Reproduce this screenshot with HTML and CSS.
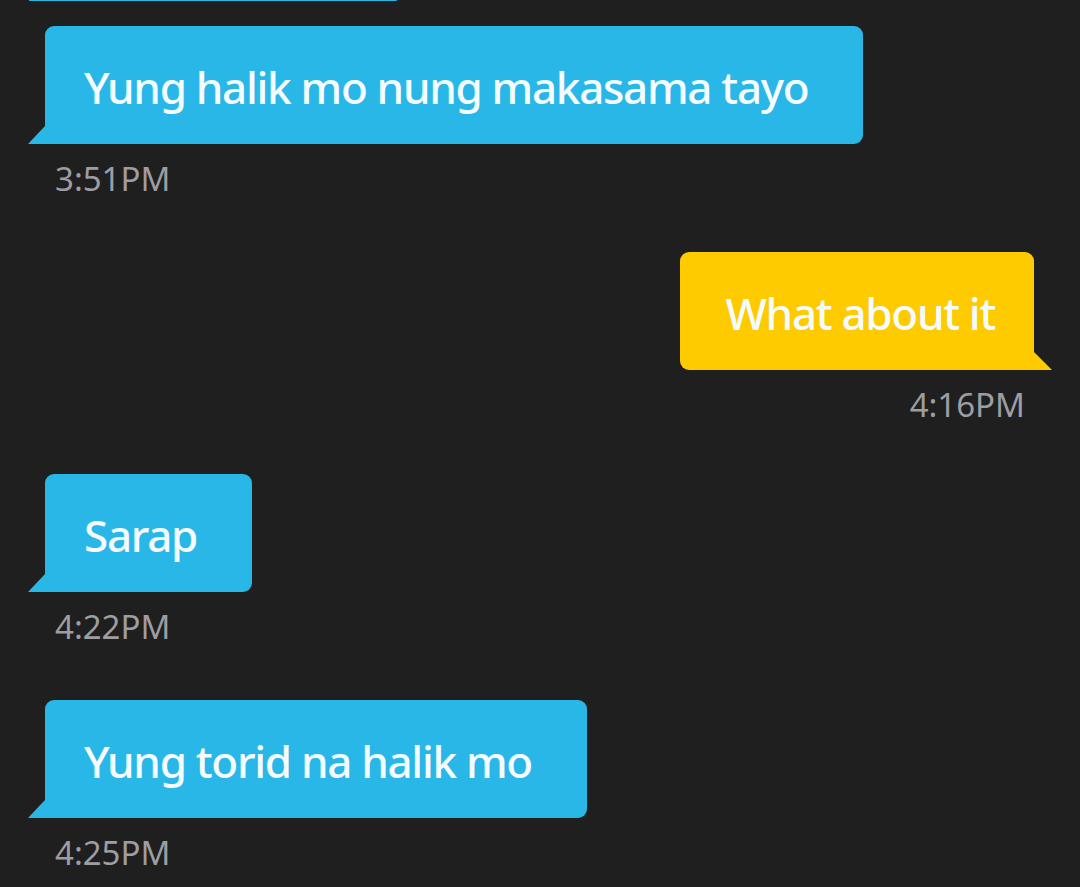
FILE: index.html
```html
<!DOCTYPE html>
<html lang="en">
<head>
    <meta charset="UTF-8">
    <meta name="viewport" content="width=device-width, initial-scale=1.0">
    <title>Chat</title>
    <link rel="stylesheet" href="styles.css">
</head>
<body>
    <div class="chat">
        <div class="bubble-cut"></div>

        <div class="msg in">
            <div class="bubble">Yung halik mo nung makasama tayo</div>
            <div class="time">3:51PM</div>
        </div>

        <div class="msg out">
            <div class="bubble">What about it</div>
            <div class="time">4:16PM</div>
        </div>

        <div class="msg in">
            <div class="bubble">Sarap</div>
            <div class="time">4:22PM</div>
        </div>

        <div class="msg in">
            <div class="bubble">Yung torid na halik mo</div>
            <div class="time">4:25PM</div>
        </div>
    </div>
</body>
</html>
```

FILE: styles.css
```css
:root {
    --bg-color: #1f1f1f;
    --blue: #29b7e8;
    --yellow: #fecb00;
    --text-color: #f5fbff;
    --dim-color: #9d9da2;
}

* {
    box-sizing: border-box;
    margin: 0;
    padding: 0;
}

body, html {
    background-color: var(--bg-color);
    font-family: 'Noto Sans', 'Open Sans', sans-serif;
    height: 100%;
    overflow: hidden;
}

.chat {
    display: flex;
    flex-direction: column;
}

.bubble-cut {
    width: 368px;
    height: 1px;
    margin-left: 29px;
    background: var(--blue);
    border-bottom-right-radius: 1px;
}

.msg {
    display: flex;
    flex-direction: column;
    margin-top: 25px;
    margin-bottom: 32px;
}

.msg.in {
    align-items: flex-start;
    padding-left: 45px;
}

.msg.out {
    align-items: flex-end;
    padding-right: 46px;
    margin-bottom: 28px;
}

.bubble {
    position: relative;
    height: 118px;
    display: flex;
    align-items: center;
    padding: 3px 55px 0 39px;
    font-size: 44px;
    font-weight: 500;
    letter-spacing: -1.3px;
    line-height: 1;
    color: var(--text-color);
    border-radius: 9px;
    white-space: nowrap;
}

.in .bubble {
    background: var(--blue);
    border-bottom-left-radius: 0;
}

.out .bubble {
    background: var(--yellow);
    border-bottom-right-radius: 0;
    padding: 3px 39px 0 46px;
}

/* tail */
.bubble::after {
    content: "";
    position: absolute;
    bottom: 0;
    width: 17px;
    height: 18px;
}

.in .bubble::after {
    left: -17px;
    background: var(--blue);
    clip-path: polygon(100% 0, 100% 100%, 0 100%);
}

.out .bubble::after {
    right: -18px;
    width: 18px;
    background: var(--yellow);
    clip-path: polygon(0 0, 100% 100%, 0 100%);
}

.time {
    margin-top: 18px;
    font-size: 33px;
    line-height: 1;
    color: var(--dim-color);
}

.in .time { padding-left: 10px; }
.out .time { padding-right: 9px; }
```
